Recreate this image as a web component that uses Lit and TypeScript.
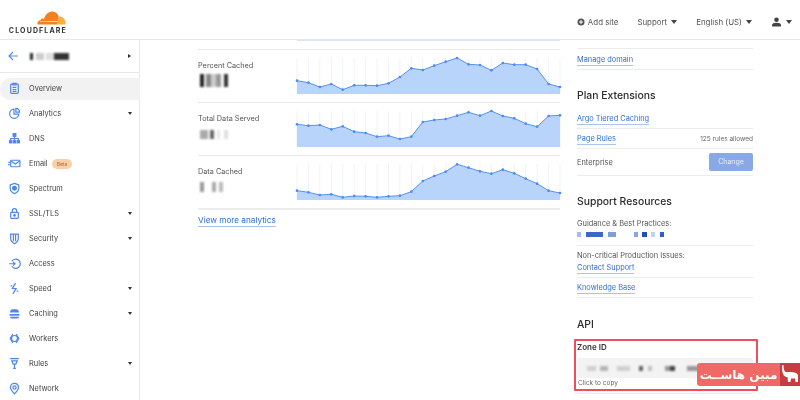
import { LitElement, html, css, svg } from "lit";
import { customElement } from "lit/decorators.js";

const W = 263;
const BASE = 36;
const charts = [
  { label: "Percent Cached", off: -23, z: [137,143,156,147,164,151,151,152,145,126,100,105,92,80,69,88,90,106,84,89,89,102,147,156],
    blocks: [[4,"#222",2],[5,"#888"],[5,"#ccc"],[5,"#999",3],[4,"#333"]] },
  { label: "Total Data Served", off: -76, z: [268,272,270,283,274,290,294,305,302,312,305,261,255,252,242,232,242,228,243,250,266,275,243,241],
    blocks: [[8,"#aaa",2],[4,"#666",3],[3,"#e6e6e6",4],[4,"#e0e0e0"]] },
  { label: "Data Cached", off: -34, z: [182,187,195,193,202,198,199,202,199,197,185,153,138,125,103,113,124,131,119,130,146,161,182,189],
    blocks: [[4,"#999",8],[4,"#aaa",3],[4,"#bbb"]] },
];

const ic = {
  overview: svg`<rect x="5" y="4" width="14" height="17" rx="1.5"/><path d="M9 2.5h6v3H9zM8.5 10h7M8.5 14h7M8.5 17.5h7"/>`,
  analytics: svg`<path d="M11 4a8.5 8.5 0 1 0 9 9h-9z"/><path d="M14.5 2.5a7 7 0 0 1 7 7h-7z"/>`,
  dns: svg`<rect x="9.5" y="3" width="5" height="5" fill="currentColor"/><path d="M12 8v4M5 16v-4h14v4M12 12v4"/><rect x="3" y="16" width="4" height="4" fill="currentColor"/><rect x="10" y="16" width="4" height="4" fill="currentColor"/><rect x="17" y="16" width="4" height="4" fill="currentColor"/>`,
  email: svg`<rect x="5" y="6" width="17" height="12" rx="1.5"/><path d="M6 8l7.5 5L21 8M0.5 10h3M0 14h3"/>`,
  spectrum: svg`<path d="M12 2.5l8 3v6c0 5-3.500 8-8 10-4.500-2-8-5-8-10v-6z"/><circle cx="12" cy="11.500" r="3.500" fill="currentColor"/>`,
  ssl: svg`<rect x="5" y="10" width="14" height="11" rx="1"/><path d="M8 10V7a4 4 0 0 1 8 0v3"/><circle cx="12" cy="15.500" r="1.500" fill="currentColor"/>`,
  security: svg`<path d="M5 4h14v8c0 4.500-3 7.500-7 9.500-4-2-7-5-7-9.500z"/><path d="M10 4v13M14 4v13"/>`,
  access: svg`<path d="M7 8a8.500 8.500 0 1 1 0 9"/><path d="M2 12.500h11M9.500 9l3.500 3.500-3.500 3.500"/>`,
  speed: svg`<path d="M14 2L8 12h7l-6 10"/><path d="M5 7h3M16 17h3"/>`,
  caching: svg`<path d="M4 9a5 5 0 0 1 5-5h6a5 5 0 0 1 5 5v1H4zM3 13h18v3H3zM4 18h16v1a2 2 0 0 1-2 2H6a2 2 0 0 1-2-2z" fill="currentColor" stroke="none"/>`,
  workers: svg`<path d="M9 4L4 12l5 8M15 4l5 8-5 8"/><circle cx="12" cy="12" r="5.500"/>`,
  rules: svg`<path d="M4 3h16M7 7h10l-2.500 6h-5zM12 13v8" /><path d="M9.500 21h5"/>`,
  network: svg`<path d="M12 22C7 16.500 4.500 13.500 4.500 10a7.500 7.500 0 0 1 15 0c0 3.500-2.500 6.500-7.500 12z"/><circle cx="12" cy="10" r="3"/>`,
};

const nav: [string, keyof typeof ic, boolean][] = [
  ["Overview", "overview", false],
  ["Analytics", "analytics", true],
  ["DNS", "dns", false],
  ["Email", "email", false],
  ["Spectrum", "spectrum", false],
  ["SSL/TLS", "ssl", true],
  ["Security", "security", true],
  ["Access", "access", false],
  ["Speed", "speed", true],
  ["Caching", "caching", true],
  ["Workers", "workers", false],
  ["Rules", "rules", true],
  ["Network", "network", false],
];

const guidance = [[4,"#a9bbe6",5],[17,"#3f66c4",5],[8,"#7f9ddc",18],[4,"#8ca5de",4],[5,"#1f4fb8",4],[4,"#c3d0ee",5],[4,"#2f5fc4",0]];
const zone = [[9,"#d0d0d0",4],[8,"#b5b5b5",9],[13,"#d0d0d0",9],[4,"#666",5],[4,"#c2c2c2",13],[5,"#999",0],[5,"#444",12],[15,"#999",0]];
const name = [[3,"#222",3],[8,"#ccc",2],[8,"#ddd",0],[15,"#333",0]];

@customElement("app-root")
export class AppRoot extends LitElement {
  static styles = css`
    :host { display: block; width: 800px; height: 400px; overflow: hidden; background: #fff; position: relative;
      font-family: Inter, "Liberation Sans", sans-serif; font-size: 7.400px; color: #444; filter: blur(0.300px); }
    * { box-sizing: border-box; }
    header { height: 40px; border-bottom: 1px solid #e8e8e8; display: flex; align-items: center; padding: 5px 8px 0 7px; }
    .logo { display: flex; flex-direction: column; align-items: flex-end; width: 59px; align-self: flex-start; margin-top: 6px; }
    .logo svg { display: block; }
    .logo span { font-size: 7px; font-weight: 700; letter-spacing: 1.150px; margin-right: -1px; color: #333; line-height: 7px; margin-top: 1.500px; white-space: nowrap; }
    .top { margin-left: auto; display: flex; align-items: center; gap: 19px; font-size: 7.900px; color: #555; }
    .top div { display: flex; align-items: center; gap: 4px; }
    .top .add { gap: 3px; }
    .caret { width: 0; height: 0; border-left: 3.500px solid transparent; border-right: 3.500px solid transparent; border-top: 4px solid #444; }
    .user { margin-left: 1px; gap: 5px !important; }
    .body { display: flex; height: 360px; }
    aside { width: 140px; flex: none; border-right: 1px solid #e8e8e8; }
    .back { height: 33px; border-bottom: 1px solid #e8e8e8; display: flex; align-items: center; padding: 0 8px; color: #5a8ee8; }
    .back .redact { margin-left: 11px; height: 7px; }
    .tri { margin-left: auto; width: 0; height: 0; border-top: 2.500px solid transparent; border-bottom: 2.500px solid transparent; border-left: 3px solid #333; }
    nav { padding-top: 3px; }
    .item { height: 25px; display: flex; align-items: center; padding-left: 8px; padding-right: 7px; gap: 8px; color: #444; position: relative; }
    .item.active::before { content: ""; position: absolute; left: 0; right: -1px; top: 1.500px; bottom: 1.500px; background: #f2f2f2; border-radius: 11px 0 0 11px; }
    .item > * { position: relative; }
    .item svg { width: 13px; height: 13px; flex: none; fill: none; stroke: currentColor; stroke-width: 2.200; color: #4f86e8; }
    .item .caret { margin-left: auto; border-left-width: 2.500px; border-right-width: 2.500px; border-top-width: 3px; border-top-color: #333; }
    .beta { margin-left: -4px; background: #fbcfa8; color: #a9713c; font-size: 5px; border-radius: 5px; padding: 0 5px; height: 10px; line-height: 10px; }
    main { flex: 1; display: flex; padding-left: 58px; gap: 17px; }
    .left { width: 362px; flex: none; }
    .strip { height: 1px; margin-left: 99px; background: #dbe6f7; margin-bottom: 8px; }
    .row { display: flex; height: 53px; border-bottom: 1px solid #e9e9e9; padding-top: 8px; }
    .rows { border-top: 1px solid #e9e9e9; }
    .row.last { height: 54px; border-bottom: 2px solid #ececec; }
    .meta { width: 99px; flex: none; }
    .meta .lab { line-height: 14px; margin-top: 1px; font-size: 7.300px; color: #555; }
    .meta .redact { margin: 1px 0 0 2px; height: 13px; }
    .row:nth-child(2) .meta .redact { height: 9px; margin-top: 4px; }
    .row.last .meta .redact { height: 10px; margin-top: 3px; }
    .chart { width: ${W}px; height: ${BASE}px; overflow: visible; display: block; }
    a { color: #2f6ed8; text-decoration: none; border-bottom: 1px solid #a9c3ee; line-height: 11px; display: inline-block; }
    .more { margin-top: 5px; font-size: 8.200px; }
    .right { width: 176px; flex: none; padding-top: 8px; }
    .r { border-bottom: 1px solid #ececec; display: flex; align-items: center; justify-content: space-between; font-size: 7.400px; color: #555; }
    .r:not(.stack) a { margin-top: 1px; }
    .r.first { border-top: 1px solid #ececec; height: 22px; }
    .r.h20 { height: 21px; }
    .r.h19 { height: 20px; }
    .r.h27 { height: 27px; }
    .r.stack { display: block; height: 32px; padding-top: 4px; }
    .r.stack .l { line-height: 12px; display: block; }
    .r small { font-size: 6.500px; color: #666; }
    h2 { margin: 0; font-size: 10.400px; font-weight: 500; color: #2a2a2a; line-height: 16px; padding: 18px 0 4px; }
    h2.api { padding: 19px 0 0; height: 34px; }
    button { all: unset; width: 44px; height: 18px; background: #88a9e6; color: #e6eefb; text-align: center; border-radius: 2px; font-size: 7px; line-height: 18px; font-family: inherit; }
    .redact { display: flex; align-items: center; filter: blur(0.800px); }
    .redact i { display: block; height: 100%; flex: none; }
    .guid { height: 5px; margin-top: 2px; filter: blur(0.300px); }
    .zone-box { margin: 7px -5px 0 -3px; height: 52px; border: 2px solid #f04d5e; padding: 0 3px 0 1px; border-radius: 1px; }
    .zone-box b { display: block; line-height: 13px; font-size: 8px; font-weight: 600; color: #333; }
    .grey { height: 20px; margin-top: 4px; background: #f3f3f3; border-radius: 2px; padding: 0 10px; display: flex; align-items: center; }
    .grey .redact { height: 5px; }
    .click { font-size: 6.500px; color: #666; line-height: 11px; padding-left: 1px; }
    .after { height: 1px; margin-top: 2px; background: #ededed; }
    .mark { position: absolute; left: 697px; top: 363px; width: 103px; height: 23px; display: flex; border-radius: 3px 0 0 3px; overflow: hidden; }
    .mark .t { flex: 1; background: #ef6a66; color: #fff; font: 700 12px "DejaVu Sans", "Noto Sans", sans-serif; display: flex; align-items: center; justify-content: center; white-space: nowrap; }
    .mark .e { width: 20px; background: #c63c3f; }
    .mark .e svg { display: block; }
  `;

  private redact(items: (number | string)[][], cls = "") {
    return html`<div class="redact ${cls}">${items.map(([w, c, g]) =>
      html`<i style="width:${w}px;background:${c};margin-right:${g ?? 0}px"></i>`)}</div>`;
  }

  private chart(z: number[], off: number) {
    const ys = z.map((v) => v / 3 + off);
    const xs = ys.map((_, i) => (i * W) / (ys.length - 1));
    const line = ys.map((y, i) => `${xs[i].toFixed(1)},${y.toFixed(1)}`).join(" ");
    return html`<svg class="chart" viewBox="0 0 ${W} ${BASE}">
      ${xs.map((x) => svg`<line x1=${x} x2=${x} y1="0" y2=${BASE} stroke="#edf3fd" stroke-width="1"/>`)}
      <polygon points="0,${BASE} ${line} ${W},${BASE}" fill="#b9d4fb"/>
      <polyline points=${line} fill="none" stroke="#5592ee" stroke-width="1"/>
      ${ys.map((y, i) => svg`<circle cx=${xs[i]} cy=${y} r="1.300" fill="#4a8bf5"/>`)}
    </svg>`;
  }

  render() {
    return html`
      <header>
        <div class="logo">
          <svg width="29" height="14" viewBox="0 0 29 14">
            <path fill="#f48120" d="M0.500 13.500c-.6-2.300.8-4.300 3-4.300.6-1.500 2.300-2 3.500-1.200C8.300 3.200 12 .3 15.500.5c3 .2 5.500 2 6.200 4.800-.6 2.500-1 5.500-1.700 8.200z"/>
            <path fill="#faae40" d="M21.500 5.500c3.500-.4 7 2.400 7 6 0 .8-.1 1.400-.4 2H19.500z"/>
            <path fill="#fff" d="M3 10.400l17-.3.400.7-17.500.3z"/>
          </svg>
          <span>CLOUDFLARE</span>
        </div>
        <div class="top">
          <div class="add">
            <svg width="8" height="8" viewBox="0 0 8 8"><circle cx="4" cy="4" r="3.500" fill="#555"/><path d="M4 2v4M2 4h4" stroke="#fff" stroke-width="1"/></svg>
            Add site
          </div>
          <div>Support <span class="caret"></span></div>
          <div>English (US) <span class="caret"></span></div>
          <div class="user">
            <svg width="9" height="10" viewBox="0 0 9 10"><circle cx="4.500" cy="2.700" r="2.300" fill="#444"/><path d="M0 9.500V8c0-1.500 2-2.300 4.500-2.300S9 6.500 9 8v1.500z" fill="#444"/></svg>
            <span class="caret"></span>
          </div>
        </div>
      </header>
      <div class="body">
        <aside>
          <div class="back">
            <svg width="11" height="10" viewBox="0 0 11 10" fill="none" stroke="currentColor" stroke-width="1.200"><path d="M10 5H1M5 1L1 5l4 4"/></svg>
            ${this.redact(name)}
            <span class="tri"></span>
          </div>
          <nav>
            ${nav.map(([label, icon, more], i) => html`
              <div class="item ${i === 0 ? "active" : ""}">
                <svg viewBox="0 0 24 24">${ic[icon]}</svg>
                <span>${label}</span>
                ${label === "Email" ? html`<span class="beta">Beta</span>` : ""}
                ${more ? html`<span class="caret"></span>` : ""}
              </div>`)}
          </nav>
        </aside>
        <main>
          <div class="left">
            <div class="strip"></div>
            <div class="rows">
              ${charts.map((c, i) => html`
                <div class="row ${i === 2 ? "last" : ""}">
                  <div class="meta">
                    <div class="lab">${c.label}</div>
                    ${this.redact(c.blocks)}
                  </div>
                  ${this.chart(c.z, c.off)}
                </div>`)}
            </div>
            <a class="more" href="#">View more analytics</a>
          </div>
          <div class="right">
            <div class="r first"><a href="#">Manage domain</a></div>
            <h2>Plan Extensions</h2>
            <div class="r h20"><a href="#">Argo Tiered Caching</a></div>
            <div class="r h19"><a href="#">Page Rules</a><small>125 rules allowed</small></div>
            <div class="r h27"><span>Enterprise</span><button>Change</button></div>
            <h2>Support Resources</h2>
            <div class="r stack">
              <span class="l">Guidance &amp; Best Practices:</span>
              ${this.redact(guidance, "guid")}
            </div>
            <div class="r stack">
              <span class="l">Non-critical Production Issues:</span>
              <a href="#">Contact Support</a>
            </div>
            <div class="r h19"><a href="#">Knowledge Base</a></div>
            <h2 class="api">API</h2>
            <div class="zone-box">
              <b>Zone ID</b>
              <div class="grey">${this.redact(zone)}</div>
              <div class="click">Click to copy</div>
            </div>
            <div class="after"></div>
          </div>
        </main>
      </div>
      <div class="mark">
        <div class="t">مبین هاســت</div>
        <div class="e">
          <svg width="20" height="23" viewBox="0 0 20 23"><path fill="#fff" d="M2 2.500l1.500-.5c0 2.500.3 5 1.500 6.500C6 9.500 8 9 10 9c3.500 0 7 .7 8 3v7h-2.500l-.5-3.500h-4L10.500 19H8l-.5-5c-1.500 0-3-.5-4-2-1.300-2.500-1.500-6-1.500-9.500z"/></svg>
        </div>
      </div>
    `;
  }
}
